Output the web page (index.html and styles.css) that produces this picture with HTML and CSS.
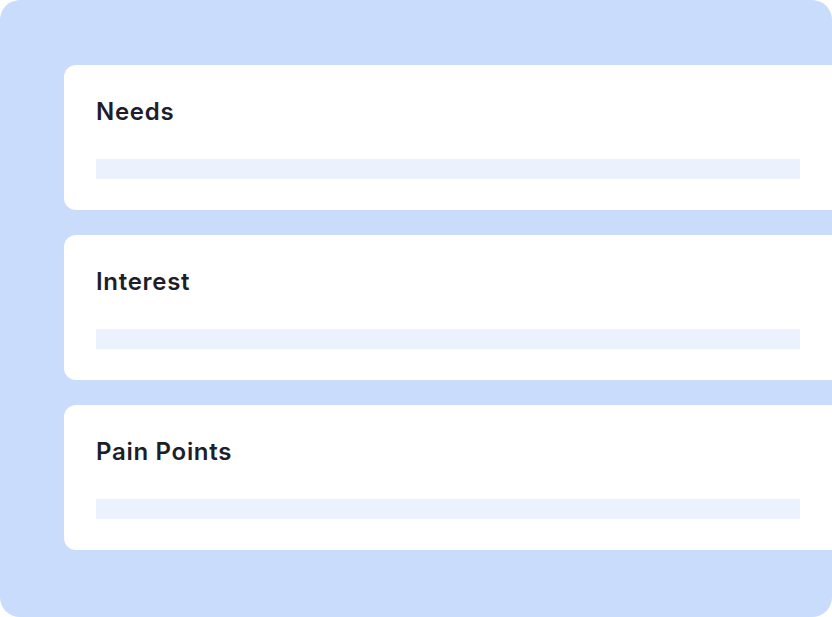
FILE: index.html
```html
<!DOCTYPE html>
<html>
<head>
<meta charset="utf-8">
<link rel="stylesheet" href="styles.css">
</head>
<body>
<div class="panel">
  <div class="card">
    <div class="title">Needs</div>
    <div class="bar"></div>
  </div>
  <div class="card">
    <div class="title">Interest</div>
    <div class="bar"></div>
  </div>
  <div class="card">
    <div class="title">Pain Points</div>
    <div class="bar"></div>
  </div>
</div>
</body>
</html>
```
FILE: styles.css
```css
html, body {
  margin: 0;
  padding: 0;
  background: #ffffff;
}
.panel {
  width: 832px;
  height: 617px;
  box-sizing: border-box;
  background: #c9dcfc;
  border-radius: 20px;
  overflow: hidden;
  padding: 65px 0 0 64px;
  display: flex;
  flex-direction: column;
  gap: 25px;
}
.card {
  width: 800px;
  height: 145px;
  flex: none;
  box-sizing: border-box;
  background: #ffffff;
  border-radius: 12px;
  padding: 32px 0 0 32px;
}
.title {
  font-family: Inter, "Noto Sans", sans-serif;
  font-weight: 600;
  font-size: 24px;
  line-height: 29px;
  letter-spacing: 0.7px;
  color: #1e1e2a;
}
.bar {
  margin-top: 33px;
  width: 704px;
  height: 20px;
  background: #ebf2fe;
}
```
